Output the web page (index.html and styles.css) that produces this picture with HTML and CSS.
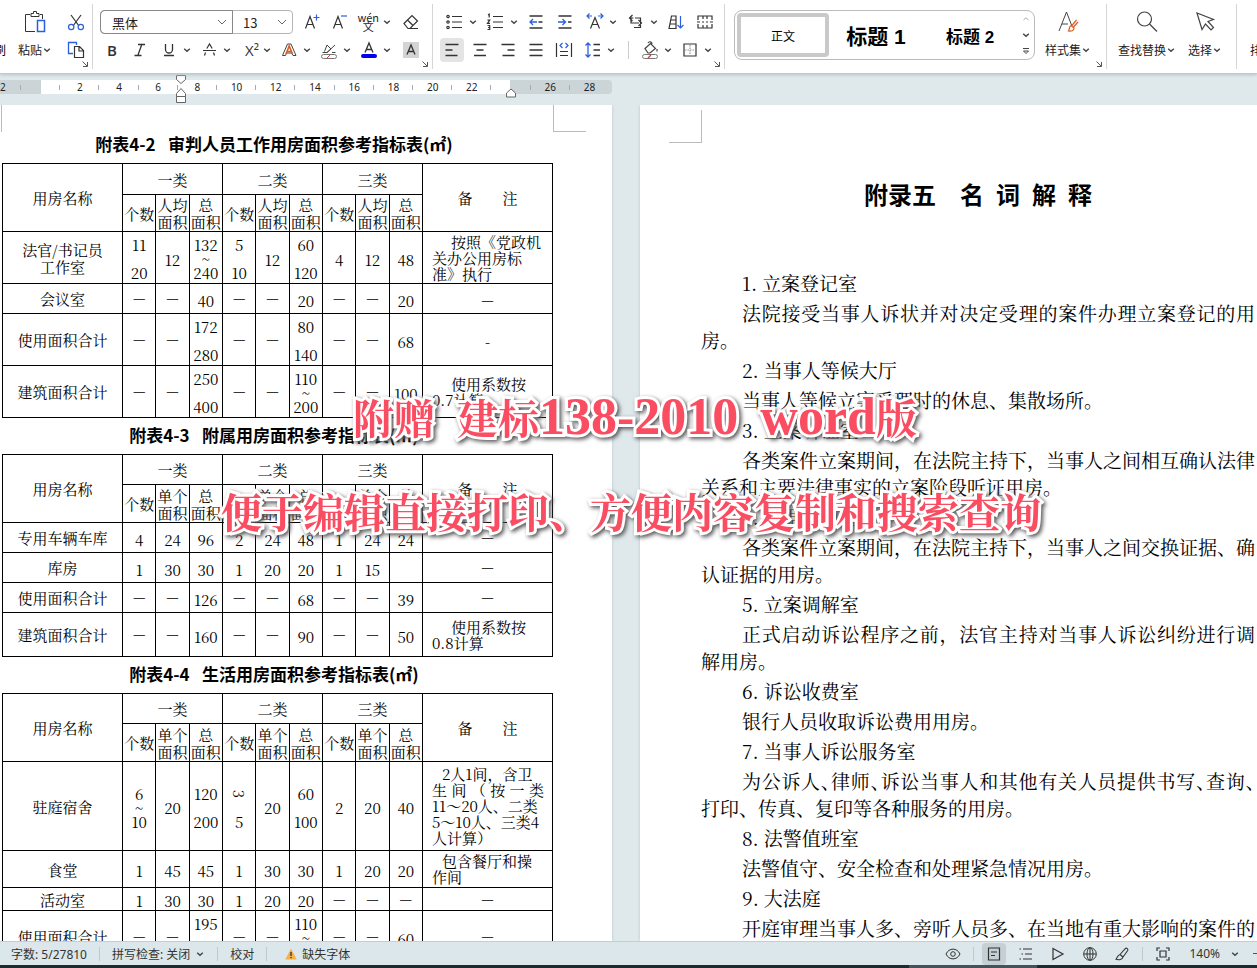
FILE: index.html
```
<!DOCTYPE html>
<html lang="zh-CN">
<head>
<meta charset="utf-8">
<title>文字编辑</title>
<link rel="stylesheet" href="styles.css">
</head>
<body>
<svg class="defs" aria-hidden="true">
  <symbol id="chev" viewBox="0 0 10 10"><path d="M2.200 3.800 5 6.200l2.800-2.400" fill="none" stroke="#444" stroke-width="1.500"/></symbol>
  <symbol id="thin" viewBox="0 0 10 10"><path d="M1 3l4 4 4-4" fill="none" stroke="#666" stroke-width="1"/></symbol>
  <symbol id="corner" viewBox="0 0 8 8"><path d="M1.500 1.500 6 6M6.500 2v4.500H2" fill="none" stroke="#555" stroke-width="1"/></symbol>
</svg>

<header class="ribbon">
  <section class="group clip">
    <span class="cut">刷</span>
    <button class="tall paste" aria-label="粘贴">
      <svg class="ic24" viewBox="0 0 24 24" fill="none" stroke="#333"><path d="M7 4.500H2.500v17H12M17 4.500h2.500V9M8 6.500h8v-3h-2.500V1.500h-3v2H8z"/><path d="M14.500 10.500h7v11h-7z" stroke="#2b5fe0" stroke-width="1.500"/></svg>
      <span class="lbl">粘贴<svg class="chev"><use href="#chev"/></svg></span>
    </button>
    <div class="pair">
      <button class="ib" aria-label="剪切"><svg viewBox="0 0 20 20" fill="none" stroke="#333" stroke-width="1.200"><path d="M5 3l8 11M15 3L7 14"/><g stroke="#2b5fe0"><circle cx="5.200" cy="15" r="2.700"/><circle cx="14.800" cy="15" r="2.700"/></g></svg></button>
      <button class="ib" aria-label="复制"><svg viewBox="0 0 20 20" fill="none"><path d="M7 13.500H2.500v-11h8V5" stroke="#2b5fe0" stroke-width="1.300"/><path d="M8.500 6.500h5l4 4v7h-9zM13 7v4h4" stroke="#333" stroke-width="1.200"/></svg></button>
    </div>
    <svg class="corner"><use href="#corner"/></svg>
  </section>

  <section class="group font">
    <div class="row">
      <div class="combos">
        <label class="combo name"><select aria-label="字体"><option>黑体</option></select><svg><use href="#thin"/></svg></label>
        <label class="combo size"><select aria-label="字号"><option>13</option></select><svg><use href="#thin"/></svg></label>
      </div>
      <button class="ib" aria-label="增大字号"><svg viewBox="0 0 20 20" fill="none" stroke="#333" stroke-width="1.200"><path d="M3.500 16.500l4.500-12 4.500 12M5.200 12.500h5.800"/><path d="M14.500 2.500v6M11.500 5.500h6" stroke="#2b5fe0"/></svg></button>
      <button class="ib" aria-label="减小字号"><svg viewBox="0 0 20 20" fill="none" stroke="#333" stroke-width="1.200"><path d="M3.500 16.500l4.500-12 4.500 12M5.200 12.500h5.800"/><path d="M11 4h6" stroke="#2b5fe0"/></svg></button>
      <button class="dd" aria-label="拼音指南"><span class="pinyin"><span>wén</span><span>文</span></span><svg class="chev"><use href="#chev"/></svg></button>
      <button class="ib wide" aria-label="清除格式"><svg viewBox="0 0 20 20" fill="none" stroke="#333" stroke-width="1.200"><path d="M3 11.500L11 3.500l5.500 5.500-7.500 7.500H7zM6.500 8l5.500 5.500M9 16.500h8"/></svg></button>
    </div>
    <div class="row">
      <button class="ib glyph bold">B</button>
      <button class="ib" aria-label="倾斜"><svg viewBox="0 0 20 20" fill="none" stroke="#333" stroke-width="1.300"><path d="M8 4.500h7M4.500 15.500h7M11.800 4.500l-4 11"/></svg></button>
      <button class="dd" aria-label="下划线"><svg viewBox="0 0 20 20" fill="none" stroke="#333" stroke-width="1.300"><path d="M6.500 4v5.500a3.500 3.500 0 007 0V4M5 15.500h10"/></svg><svg class="chev"><use href="#chev"/></svg></button>
      <button class="dd" aria-label="删除线"><svg viewBox="0 0 20 20" fill="none" stroke="#333" stroke-width="1.200"><path d="M4 10.500h13M7.800 8.500L10.500 4l2.700 4.500M6.500 12.500l-1 3M14.500 12.500l1 3"/></svg><svg class="chev"><use href="#chev"/></svg></button>
      <button class="dd" aria-label="上标"><span class="glyph">X²</span><svg class="chev"><use href="#chev"/></svg></button>
      <button class="dd" aria-label="文字效果"><svg viewBox="0 0 20 20" fill="none"><path d="M3.500 15.500L8.500 4h3.500l5 11.500h-3l-1-2.500H7.500l-1 2.500z" stroke="#444"/><path d="M7 14l3.200-8 3.300 8M8 11.500h4.500" stroke="#e05a1e" stroke-width="1.600"/></svg><svg class="chev"><use href="#chev"/></svg></button>
      <button class="dd" aria-label="突出显示"><svg viewBox="0 0 20 20" fill="none" stroke="#444"><path d="M3.500 12.500H8l8-7.500M5.500 11.500L8 5l4 4-4 3.500M13 12.500h3.500"/><rect x="2.500" y="14.500" width="15" height="4" rx="2" stroke="#777"/><path d="M8 18l3-3" stroke="#e33"/></svg><svg class="chev"><use href="#chev"/></svg></button>
      <button class="dd" aria-label="字体颜色"><svg viewBox="0 0 20 20" fill="none"><path d="M6 12.500l4-9.500 4 9.500M7.400 9.500h5.200" stroke="#333" stroke-width="1.300"/><rect x="2" y="14" width="16" height="4" rx="2" fill="#0000f0"/></svg><svg class="chev"><use href="#chev"/></svg></button>
      <button class="ib wide" aria-label="字符底纹"><svg viewBox="0 0 20 20" fill="none"><path fill="#d4d4d4" d="M2 2h16v16H2z"/><path d="M6 14.500l4-9.500 4 9.500M7.400 11.500h5.200" stroke="#333" stroke-width="1.300"/></svg></button>
    </div>
    <svg class="corner"><use href="#corner"/></svg>
  </section>

  <section class="group para">
    <div class="row r1">
      <button class="dd" aria-label="项目符号"><svg viewBox="0 0 20 20" fill="none" stroke="#333" stroke-width="1.200"><path d="M7 4.500h10M7 10h10M7 15.500h10"/><circle cx="3" cy="4.500" r="1.200"/><circle cx="3" cy="10" r="1.200"/><circle cx="3" cy="15.500" r="1.200"/></svg><svg class="chev"><use href="#chev"/></svg></button>
      <button class="dd" aria-label="编号"><svg viewBox="0 0 20 20" fill="none" stroke="#333" stroke-width="1.200"><path d="M7 4.500h10M7 10h10M7 15.500h10M2 3l1.200-.8v3.300M1.500 8.200h2.200L1.500 11.300h2.500M1.500 13.500h2.200v4H1.500M2 15.500h1.700"/></svg><svg class="chev"><use href="#chev"/></svg></button>
      <button class="ib" aria-label="减少缩进"><svg viewBox="0 0 20 20" fill="none" stroke="#333" stroke-width="1.300"><path d="M3.500 4h13M12.500 10h4M3.500 16h13"/><path d="M11 10H4M7 7l-3 3 3 3" stroke="#2b5fe0"/></svg></button>
      <button class="ib" aria-label="增加缩进"><svg viewBox="0 0 20 20" fill="none" stroke="#333" stroke-width="1.300"><path d="M3.500 4h13M13 10h3.500M3.500 16h13"/><path d="M3 10h7M7.500 7l3 3-3 3" stroke="#2b5fe0"/></svg></button>
      <button class="dd" aria-label="中文版式"><svg viewBox="0 0 20 20" fill="none" stroke="#333" stroke-width="1.200"><path d="M5.500 16.500l4.500-11 4.500 11M7 12.500h6"/><path d="M7 4H2M4.500 1.500L2 4l2.500 2.500M13 4h5M15.500 1.500L18 4l-2.500 2.500" stroke="#2b5fe0"/></svg><svg class="chev"><use href="#chev"/></svg></button>
      <button class="dd" aria-label="显示标记"><svg viewBox="0 0 20 20" fill="none" stroke="#333" stroke-width="1.200"><path d="M6.500 3L3.500 6l3 3M3.500 6H7M3.500 6h4M5 6v5h8M12.500 8l3 3-3 3M8 15.500h6.500V6H9"/></svg><svg class="chev"><use href="#chev"/></svg></button>
      <button class="ib" aria-label="排序"><svg viewBox="0 0 20 20" fill="none" stroke="#333" stroke-width="1.200"><path d="M3 16.500L5.500 4H10v12.500zM4.500 8H10M4 12h6"/><path d="M14.500 4v12M11.500 13l3 3 3-3" stroke="#2b5fe0"/></svg></button>
      <button class="ib" aria-label="制表位"><svg viewBox="0 0 20 20" fill="none" stroke="#333" stroke-width="1.200"><path d="M3 8V4h14v4M3 12v4h14v-4M8 4v3M12 4v3M8 13v3M12 13v3M2 10h3M7 10h2M11 10h2M15 10h3"/></svg></button>
    </div>
    <div class="row">
      <button class="ib on" aria-label="左对齐"><svg viewBox="0 0 20 20" stroke="#333" stroke-width="1.300"><path d="M3.500 4.500h13M3.500 10h7M3.500 15.500h12"/></svg></button>
      <button class="ib" aria-label="居中"><svg viewBox="0 0 20 20" stroke="#333" stroke-width="1.300"><path d="M3.500 4.500h13M6.500 10h7M4 15.500h12"/></svg></button>
      <button class="ib" aria-label="右对齐"><svg viewBox="0 0 20 20" stroke="#333" stroke-width="1.300"><path d="M3.500 4.500h13M9.500 10h7M4.500 15.500h12"/></svg></button>
      <button class="ib" aria-label="两端对齐"><svg viewBox="0 0 20 20" stroke="#333" stroke-width="1.300"><path d="M3.500 4.500h13M3.500 10h13M3.500 15.500h13"/></svg></button>
      <button class="ib" aria-label="分散对齐"><svg viewBox="0 0 20 20" fill="none" stroke="#333" stroke-width="1.200"><path d="M2.500 3v14M17.500 3v14M6 11.500h8M6 15.500h8"/><path d="M8.500 3L6 5.500 8.500 8M11.500 3L14 5.500 11.500 8" stroke="#2b5fe0"/></svg></button>
      <button class="dd" aria-label="行距"><svg viewBox="0 0 20 20" fill="none" stroke="#333" stroke-width="1.300"><path d="M10.500 4.500H17M10.500 10H17M10.500 15.500H17"/><path d="M5 3v14M2.500 5.500L5 3l2.500 2.500M2.500 14.500L5 17l2.500-2.500" stroke="#2b5fe0"/></svg><svg class="chev"><use href="#chev"/></svg></button>
      <span class="vline"></span>
      <button class="dd" aria-label="底纹颜色"><svg viewBox="0 0 20 20" fill="none" stroke="#444" stroke-width="1.200"><path d="M5 8.500l5.500-5 5 5-5.500 4.500H8zM8 3c1-2 4-1.500 4 1M17 9v2.500"/><rect x="2.500" y="14.500" width="15" height="4" rx="2" stroke="#777" stroke-width="1"/><path d="M8 18l3-3" stroke="#e33"/></svg><svg class="chev"><use href="#chev"/></svg></button>
      <button class="dd" aria-label="边框"><svg viewBox="0 0 20 20" fill="none" stroke="#333" stroke-width="1.200"><path d="M4 4h12v12H4z"/><path d="M10 5v10M5 10h10" stroke="#999" stroke-dasharray="1.500 1"/></svg><svg class="chev"><use href="#chev"/></svg></button>
    </div>
    <svg class="corner"><use href="#corner"/></svg>
  </section>

  <section class="group styles">
    <div class="gallery">
      <button class="style picked">正文</button>
      <button class="style h1">标题 1</button>
      <button class="style h2">标题 2</button>
      <span class="spin">
        <svg viewBox="0 0 10 10" fill="none" stroke="#aaa"><path d="M2.500 6L5 3.800 7.500 6"/></svg>
        <svg><use href="#chev"/></svg>
        <svg viewBox="0 0 10 10" fill="none" stroke="#444"><path d="M2 2.500h6M2.500 5L5 7.500 7.500 5z"/></svg>
      </span>
    </div>
    <button class="tall">
      <svg class="ic24" viewBox="0 0 24 24" fill="none" stroke="#444"><path d="M3 21L10.500 2l5 13M6 14h6"/><path d="M20.500 10l-5 6M22 12l-4.500 5M15 15.500l3 2.500c0 3-3 3.500-5.500 3 1-1.500.5-4.500 2.500-5.500z" stroke="#e05a1e" stroke-width="1.200"/></svg>
      <span class="lbl">样式集<svg class="chev"><use href="#chev"/></svg></span>
    </button>
    <svg class="corner"><use href="#corner"/></svg>
  </section>

  <section class="group find">
    <button class="tall">
      <svg class="ic24" viewBox="0 0 24 24" fill="none" stroke="#444" stroke-width="1.200"><circle cx="9.500" cy="9" r="7"/><path d="M14.500 14l7.500 7.500"/></svg>
      <span class="lbl">查找替换<svg class="chev"><use href="#chev"/></svg></span>
    </button>
    <button class="tall">
      <svg class="ic24" viewBox="0 0 24 24" fill="none" stroke="#444" stroke-width="1.200"><path d="M4 3l5 16.500 3.500-5.500 5.500 6 2.500-2.500-5.500-6 5.500-2z"/></svg>
      <span class="lbl">选择<svg class="chev"><use href="#chev"/></svg></span>
    </button>
  </section>
  <section class="group last"><button class="tall"><span class="ic24"></span><span class="lbl">排列</span></button></section>
</header>

<div class="rulerband">
  <div class="ruler">
    <span>2</span><span></span><span>2</span><span>4</span><span>6</span><span>8</span><span>10</span><span>12</span><span>14</span><span>16</span><span>18</span><span>20</span><span>22</span><span></span><span>26</span><span>28</span>
    <svg class="mark first" viewBox="0 0 12 30" fill="#fff" stroke="#666"><path d="M1.500 1.500h9v4L6 9.500 1.500 5.500zM1.500 19.500L6 14.500l4.500 5v3h-9zM1.500 22.500h9v6h-9z"/></svg>
    <svg class="mark end" viewBox="0 0 12 10" fill="#fff" stroke="#666"><path d="M1.500 5L6 1l4.500 4v4h-9z"/></svg>
  </div>
</div>

<main class="desk">
  <article class="page left">
    <i class="crop c1"></i><i class="crop c2"></i>
    <h2 class="cap">附表4-2&ensp;&nbsp;审判人员工作用房面积参考指标表(㎡)</h2>
    <table class="grid">
      <colgroup><col class="cn"><col><col><col><col><col><col><col><col><col><col class="cr"></colgroup>
      <tr class="h31"><th rowspan="2">用房名称</th><th colspan="3">一类</th><th colspan="3">二类</th><th colspan="3">三类</th><th rowspan="2">备&emsp;&emsp;注</th></tr>
      <tr class="h37"><th>个数</th><th>人均<br>面积</th><th>总<br>面积</th><th>个数</th><th>人均<br>面积</th><th>总<br>面积</th><th>个数</th><th>人均<br>面积</th><th>总<br>面积</th></tr>
      <tr class="h52"><th>法官/书记员<br>工作室</th><td class="rg">11<br><br>20</td><td>12</td><td class="rg">132<br>~<br>240</td><td class="rg">5<br><br>10</td><td>12</td><td class="rg">60<br><br>120</td><td>4</td><td>12</td><td>48</td><td class="note"><p>按照《党政机<br>关办公用房标<br>准》执行</p></td></tr>
      <tr class="h30"><th>会议室</th><th>－</th><th>－</th><td>40</td><th>－</th><th>－</th><td>20</td><th>－</th><th>－</th><td>20</td><td>－</td></tr>
      <tr class="h52"><th>使用面积合计</th><th>－</th><th>－</th><td class="rg">172<br><br>280</td><th>－</th><th>－</th><td class="rg">80<br><br>140</td><th>－</th><th>－</th><td>68</td><td>-</td></tr>
      <tr class="h52"><th>建筑面积合计</th><th>－</th><th>－</th><td class="rg">250<br><br>400</td><th>－</th><th>－</th><td class="rg">110<br>~<br>200</td><th>－</th><th>－</th><td>100</td><td class="note"><p>使用系数按<br>0.7计算</p></td></tr>
    </table>

    <h2 class="cap">附表4-3&ensp;&nbsp;附属用房面积参考指标表(㎡)</h2>
    <table class="grid">
      <colgroup><col class="cn"><col><col><col><col><col><col><col><col><col><col class="cr"></colgroup>
      <tr class="h30"><th rowspan="2">用房名称</th><th colspan="3">一类</th><th colspan="3">二类</th><th colspan="3">三类</th><th rowspan="2">备&emsp;&emsp;注</th></tr>
      <tr class="h38"><th>个数</th><th>单个<br>面积</th><th>总<br>面积</th><th>个数</th><th>单个<br>面积</th><th>总<br>面积</th><th>个数</th><th>单个<br>面积</th><th>总<br>面积</th></tr>
      <tr class="h30"><th>专用车辆车库</th><td>4</td><td>24</td><td>96</td><td>2</td><td>24</td><td>48</td><td>1</td><td>24</td><td>24</td><th>－</th></tr>
      <tr class="h30"><th>库房</th><td>1</td><td>30</td><td>30</td><td>1</td><td>20</td><td>20</td><td>1</td><td>15</td><td></td><th>－</th></tr>
      <tr class="h30"><th>使用面积合计</th><th>－</th><th>－</th><td>126</td><th>－</th><th>－</th><td>68</td><th>－</th><th>－</th><td>39</td><th>－</th></tr>
      <tr class="h44"><th>建筑面积合计</th><th>－</th><th>－</th><td>160</td><th>－</th><th>－</th><td>90</td><th>－</th><th>－</th><td>50</td><td class="note"><p>使用系数按<br>0.8计算</p></td></tr>
    </table>

    <h2 class="cap">附表4-4&ensp;&nbsp;生活用房面积参考指标表(㎡)</h2>
    <table class="grid">
      <colgroup><col class="cn"><col><col><col><col><col><col><col><col><col><col class="cr"></colgroup>
      <tr class="h30"><th rowspan="2">用房名称</th><th colspan="3">一类</th><th colspan="3">二类</th><th colspan="3">三类</th><th rowspan="2">备&emsp;&emsp;注</th></tr>
      <tr class="h38"><th>个数</th><th>单个<br>面积</th><th>总<br>面积</th><th>个数</th><th>单个<br>面积</th><th>总<br>面积</th><th>个数</th><th>单个<br>面积</th><th>总<br>面积</th></tr>
      <tr class="h89"><th>驻庭宿舍</th><td class="rg">6<br>~<br>10</td><td>20</td><td class="rg">120<br><br>200</td><td class="rg"><span class="turn">3</span><br><br>5</td><td>20</td><td class="rg">60<br><br>100</td><td>2</td><td>20</td><td>40</td><td class="note narrow"><p>2人1间，含卫<br><span class="spread">生间（按一类</span>11～20人、二类<br>5～10人、三类4<br>人计算）</p></td></tr>
      <tr class="h37"><th>食堂</th><td>1</td><td>45</td><td>45</td><td>1</td><td>30</td><td>30</td><td>1</td><td>20</td><td>20</td><td class="note narrow"><p>包含餐厅和操<br>作间</p></td></tr>
      <tr class="h23"><th>活动室</th><td>1</td><td>30</td><td>30</td><td>1</td><td>20</td><td>20</td><th>－</th><th>－</th><th>－</th><th>－</th></tr>
      <tr class="h52"><th>使用面积合计</th><th>－</th><th>－</th><td class="rg">195<br><br>280</td><th>－</th><th>－</th><td class="rg">110<br>~<br>200</td><th>－</th><th>－</th><td>60</td><th>－</th></tr>
    </table>
  </article>

  <article class="page right">
    <i class="crop c3"></i>
    <h1 class="chapter">附录五&emsp;名&ensp;词&ensp;解&ensp;释</h1>
    <div class="text">
      <p>1. 立案登记室</p>
      <p><span class="full">法院接受当事人诉状并对决定受理的案件办理立案登记的用</span>房。</p>
      <p>2. 当事人等候大厅</p>
      <p>当事人等候立案受理时的休息、集散场所。</p>
      <p>3. 立案听证室</p>
      <p><span class="full">各类案件立案期间，在法院主持下，当事人之间相互确认法律</span>关系和主要法律事实的立案阶段听证用房。</p>
      <p>4. 证据交换室</p>
      <p><span class="full">各类案件立案期间，在法院主持下，当事人之间交换证据、确</span>认证据的用房。</p>
      <p>5. 立案调解室</p>
      <p><span class="full">正式启动诉讼程序之前，法官主持对当事人诉讼纠纷进行调</span>解用房。</p>
      <p>6. 诉讼收费室</p>
      <p>银行人员收取诉讼费用用房。</p>
      <p>7. 当事人诉讼服务室</p>
      <p><span class="full dense">为公诉人、律师、诉讼当事人和其他有关人员提供书写、查询、</span>打印、传真、复印等各种服务的用房。</p>
      <p>8. 法警值班室</p>
      <p>法警值守、安全检查和处理紧急情况用房。</p>
      <p>9. 大法庭</p>
      <p><span class="full">开庭审理当事人多、旁听人员多、在当地有重大影响的案件的</span></p>
    </div>
  </article>

  <div class="banner one"><span>附赠</span><span>建标<b>138-2010</b></span><span><b>word</b>版</span></div>
  <div class="banner two">便于编辑直接打印、方便内容复制和搜索查询</div>
</main>

<footer class="status">
  <button class="st">字数: 5/27810</button><span class="vl"></span>
  <button class="st">拼写检查: 关闭<svg class="chev"><use href="#chev"/></svg></button><span class="vl"></span>
  <button class="st">校对</button><span class="vl"></span>
  <button class="st warn"><svg viewBox="0 0 12 12"><path d="M6 .5l5.700 11H.3z" fill="#f5b04a"/><path d="M6 4v4M6 9v1.300" stroke="#333" stroke-width="1.300"/></svg>缺失字体</button>
  <span class="fill"></span>
  <button class="si" aria-label="护眼"><svg viewBox="0 0 16 16" fill="none" stroke="#333"><path d="M1 8c3-6.500 11-6.500 14 0-3 6.500-11 6.500-14 0z"/><circle cx="8" cy="8" r="2.300"/></svg></button><span class="vl"></span>
  <button class="si on" aria-label="页面视图"><svg viewBox="0 0 16 16" fill="none" stroke="#333" stroke-width="1.200"><path d="M2.500 2h11v12h-11zM5 6h6M5 9.500h4"/></svg></button>
  <button class="si" aria-label="大纲"><svg viewBox="0 0 16 16" fill="none" stroke="#333" stroke-width="1.200"><path d="M5 3h9M7 8h7M5 13h9M1.500 3H3M3.500 8H5M1.500 13H3"/></svg></button>
  <button class="si" aria-label="播放"><svg viewBox="0 0 16 16" fill="none" stroke="#333" stroke-width="1.200"><path d="M3 2.500L13 8 3 13.500z"/></svg></button>
  <button class="si" aria-label="网页视图"><svg viewBox="0 0 16 16" fill="none" stroke="#333"><circle cx="8" cy="8" r="6.300"/><ellipse cx="8" cy="8" rx="3" ry="6.300"/><path d="M2 8h12M8 2v12"/></svg></button>
  <button class="si" aria-label="写作"><svg viewBox="0 0 16 16" fill="none" stroke="#333" stroke-width="1.100"><path d="M6 8.500l5.500-6c1-1 3 .5 2.200 2L9 11zM6 8.500c-2.500.3-2.500 3-4 4.800 2.500.8 6.500.5 7-2.300z"/></svg></button><span class="vl"></span>
  <button class="si" aria-label="适合窗口"><svg viewBox="0 0 16 16" fill="none" stroke="#333" stroke-width="1.200"><path d="M2 5V2h3M11 2h3v3M14 11v3h-3M5 14H2v-3M5 5h6v6H5z"/></svg></button>
  <button class="st zoom">140%<svg class="chev"><use href="#chev"/></svg></button><span class="minus"></span>
</footer>
<div class="taskbar"><span></span></div>
</body>
</html>
```
FILE: styles.css
```
* { box-sizing: border-box; }
body {
  margin: 0; height: 100vh; display: flex; flex-direction: column; overflow: hidden;
  background: #dfe9eb; color: #000;
  font-family: "Noto Sans CJK SC", sans-serif; font-size: 12px;
}
.defs { display: none; }
button { border: 0; padding: 0; background: none; font: inherit; color: #222; display: flex; align-items: center; justify-content: center; }
svg { display: block; flex: none; }
.chev { width: 10px; height: 10px; }

/* ribbon */
.ribbon { flex: none; height: 74px; display: flex; background: #fff; border-bottom: 1px solid #c3cccd; box-shadow: 0 1px 3px #b4c4c6; z-index: 1; overflow: hidden; }
.group { position: relative; flex: none; margin: 4px 0; border-right: 1px solid #d5d5d5; }
.corner { position: absolute; right: 3px; bottom: 1px; width: 8px; height: 8px; }
.row { display: flex; align-items: center; gap: 4px; height: 28px; }
.r1 { gap: 5px; padding-left: 2px; }
.ib { width: 24px; height: 24px; border-radius: 4px; }
.ib svg, .dd svg:first-child { width: 20px; height: 20px; }
.wide { width: 30px; }
.on { background: #e4e4e4; }
.dd { width: 36px; height: 24px; justify-content: flex-end; }
.dd > :first-child { margin-right: 3px; }
.glyph { font: 15px "Open Sans", sans-serif; color: #333; }
.bold { font-weight: 600; }
.pinyin { display: flex; flex-direction: column; align-items: center; font-size: 11px; line-height: 9px; }
.vline { width: 1px; height: 18px; background: #ccc; margin: 0 4px 0 8px; }

.clip { display: flex; width: 93px; overflow: hidden; }
.cut { width: 6px; display: flex; justify-content: flex-end; align-items: flex-end; height: 56px; line-height: 20px; }
.tall { flex-direction: column; justify-content: flex-start; padding-top: 6px; gap: 6px; }
.ic24 { width: 24px; height: 24px; }
.lbl { display: flex; align-items: center; line-height: 20px; white-space: nowrap; }
.paste { width: 58px; }
.pair { padding-top: 6px; display: flex; flex-direction: column; gap: 4px; }
.font { width: 340px; padding: 4px 0 0 7px; }
.para { width: 292px; padding: 4px 0 0 7px; }
.combos { display: flex; width: 193px; height: 24px; border: 1px solid #b5b5b5; border-radius: 4px; margin-right: 3px; }
.combo { position: relative; display: flex; }
.combo select { appearance: none; width: 100%; border: 0; background: none; padding: 0 11px; font: 13px "Noto Sans CJK SC", sans-serif; color: #222; }
.combo svg { position: absolute; right: 5px; top: 6px; width: 10px; height: 10px; }
.name { width: 131px; outline: 1px solid #888; border-radius: 4px 0 0 4px; }
.size { flex: 1; }
.styles { display: flex; width: 382px; padding-left: 9px; }
.gallery { display: flex; align-items: center; width: 301px; height: 50px; margin-top: 6px; border: 1px solid #bbb; border-radius: 8px; padding-left: 2px; }
.style { width: 94px; height: 44px; white-space: nowrap; color: #000; }
.picked { width: 92px; border: 4px solid #c9c9c9; border-radius: 4px; font-size: 12px; }
.h1 { font: bold 21px "Liberation Sans", "Noto Sans CJK SC", sans-serif; }
.h2 { font: bold 17px "Liberation Sans", "Noto Sans CJK SC", sans-serif; }
.spin { flex: 1; display: flex; flex-direction: column; align-items: flex-end; gap: 6px; padding-right: 3px; }
.spin svg { width: 10px; height: 10px; }
.styles .tall { flex: 1; padding-right: 5px; }
.find { display: flex; width: 130px; padding-left: 11px; gap: 12px; }
.last { padding-left: 13px; border: 0; }

/* ruler */
.rulerband { flex: none; height: 31px; padding-top: 6px; background: #dfe9eb; }
.ruler { position: relative; width: 612px; height: 14px; padding-right: 3px; display: flex; border-radius: 0 4px 4px 0; background: linear-gradient(to right, #cbd5d7 41px, #fff 41px, #fff 510px, #cbd5d7 510px); }
.ruler span { flex: 1 1 0; text-align: center; font: 10px/14px "Noto Sans", sans-serif; color: #222; background: linear-gradient(#aaa, #aaa) right center / 1px 5px no-repeat; }
.ruler span:first-child { flex: none; width: 21px; padding-right: 18px; }
.ruler span:last-of-type { background: none; }
.mark { position: absolute; width: 12px; }
.first { left: 175px; top: -6px; height: 30px; }
.end { left: 505px; top: 8px; height: 10px; }

/* document */
.desk { position: relative; flex: 1; min-height: 0; display: flex; gap: 28px; overflow: hidden; }
.page { position: relative; background: #fff; box-shadow: 0 0 3px #b9c6c8; }
.left { flex: none; width: 612px; padding: 22px 0 0 2px; }
.right { flex: 1; min-width: 0; padding: 69px 2px 0 61px; }
.crop { position: absolute; width: 33px; height: 33px; border: 0 solid #bbb; }
.c1 { left: 1px; top: 0; width: 1px; height: 27px; border-left-width: 1px; }
.c2 { left: 553px; top: 0; height: 27px; border-width: 0 0 1px 1px; }
.c3 { left: 29px; top: 5px; border-width: 0 1px 1px 0; }
.cap { margin: 0; width: 544px; height: 36px; text-align: center; font: bold 17px/34px "Noto Sans CJK SC", sans-serif; white-space: nowrap; }
.grid { width: 551px; table-layout: fixed; border-collapse: collapse; font: 15px/17px "Noto Serif CJK SC", "Noto Sans CJK SC", serif; }
.grid .cn { width: 120px; }
.grid .cr { width: 130px; }
.grid th, .grid td { border: 1px solid #000; padding: 0; text-align: center; font-weight: 400; white-space: nowrap; overflow: hidden; }
.grid td { padding-top: 3px; }
.grid td.rg { line-height: 14px; }
.grid td.note { padding: 0 8px 0 9px; text-align: left; line-height: 16px; }
.note p { margin: 0; text-indent: 19px; }
.note.narrow p { text-indent: 10px; }
.spread { display: block; text-align: justify; text-align-last: justify; text-indent: 0; }
.turn { display: inline-block; transform: rotate(90deg); }
.h23 { height: 23px; } .h30 { height: 30px; } .h31 { height: 31px; } .h37 { height: 37px; } .h38 { height: 38px; }
.h44 { height: 44px; } .h52 { height: 52px; } .h89 { height: 89px; }

.chapter { margin: 0 0 55px; text-align: center; font: bold 24px/40px "Noto Sans CJK SC", sans-serif; white-space: nowrap; }
.text { font: 400 19px/27px "Noto Serif CJK SC", "Noto Sans CJK SC", serif; }
.text p { margin: 0 0 3px; text-indent: 41px; white-space: nowrap; }
.text p:has(.full) { text-indent: 0; }
.full { display: block; text-align: justify; text-align-last: justify; text-indent: 41px; }
.dense { font-feature-settings: "halt"; }

.banner { position: absolute; display: flex; white-space: nowrap; color: #fb4d62; font: 700 41px/60px "Noto Serif CJK SC", "Noto Sans CJK SC", serif; -webkit-text-stroke: 6px #fff; paint-order: stroke fill; filter: drop-shadow(2px 2px 2px #555); }
.banner b { font: bold 52px/60px "Liberation Serif", serif; }
.banner span { display: flex; align-items: center; }
.one { left: 353px; top: 282px; gap: 22px; }
.two { left: 221px; top: 376px; }

/* status bar */
.status { flex: none; height: 24px; display: flex; align-items: center; background: #dbe7ea; border-top: 1px solid #c2ced1; padding: 0 0 0 11px; }
.st { height: 22px; white-space: nowrap; gap: 5px; color: #333; font-family: "Noto Sans", "Noto Sans CJK SC", sans-serif; }
.vl { width: 1px; height: 14px; background: #c0cacd; margin: 0 12px; }
.warn { margin-left: 6px; }
.warn svg { width: 12px; height: 12px; }
.fill { flex: 1; }
.si { width: 24px; height: 22px; margin-right: 8px; border-radius: 4px; }
.si svg { width: 16px; height: 16px; }
.si.on { background: #c4d0d3; }
.si + .vl { margin: 0 8px 0 0; }
.zoom { gap: 10px; margin-left: 6px; }
.minus { width: 4px; height: 1px; margin-left: 13px; background: #555; }
.taskbar { flex: none; height: 3px; background: #1d2b31; display: flex; }
.taskbar span { width: 128px; margin-left: 909px; background: #44525a; }
```
